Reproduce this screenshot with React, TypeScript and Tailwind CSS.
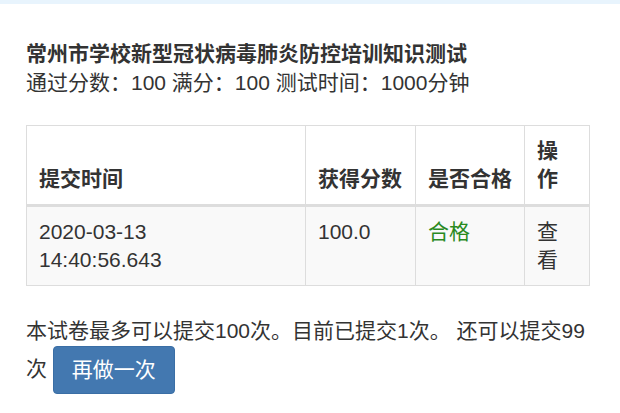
import React from 'react';

type Attempt = {
  time: string[];
  score: string;
  passed: boolean;
};

const attempts: Attempt[] = [
  { time: ['2020-03-13', '14:40:56.643'], score: '100.0', passed: true },
];

export default function App() {
  return (
    <div className="min-h-[413px] w-[620px] bg-white text-[#333] text-[21px] leading-[28px] [font-family:'Liberation_Sans','Noto_Sans_CJK_SC',sans-serif]">
      <div className="h-[4px] bg-[#e8f4fd]" />
      <div className="pl-[26px] pr-[30px] pt-[35px]">
        <div className="leading-[29px]">
          <div className="font-bold">常州市学校新型冠状病毒肺炎防控培训知识测试</div>
          <div>通过分数：100 满分：100 测试时间：1000分钟</div>
        </div>

        <table className="mt-[28px] w-[563px] table-fixed border-collapse border border-[#ddd]">
          <colgroup>
            <col className="w-[279px]" />
            <col className="w-[110px]" />
            <col className="w-[109px]" />
            <col className="w-[65px]" />
          </colgroup>
          <thead>
            <tr>
              <th className="border border-b-[3px] border-[#ddd] px-[12px] py-[11px] text-left align-bottom font-bold">提交时间</th>
              <th className="border border-b-[3px] border-[#ddd] px-[12px] py-[11px] text-left align-bottom font-bold">获得分数</th>
              <th className="border border-b-[3px] border-[#ddd] px-[12px] py-[11px] text-left align-bottom font-bold">是否合格</th>
              <th className="border border-b-[3px] border-[#ddd] px-[12px] py-[11px] text-left align-bottom font-bold">操作</th>
            </tr>
          </thead>
          <tbody>
            {attempts.map((a, i) => (
              <tr key={i} className="bg-[#f9f9f9]">
                <td className="border border-[#ddd] px-[12px] py-[11px] align-top">
                  {a.time[0]}
                  <br />
                  {a.time[1]}
                </td>
                <td className="border border-[#ddd] px-[12px] py-[11px] align-top">{a.score}</td>
                <td className="border border-[#ddd] px-[12px] py-[11px] align-top text-[#2a8a1f]">
                  {a.passed ? '合格' : '不合格'}
                </td>
                <td className="border border-[#ddd] px-[12px] py-[11px] align-top">查看</td>
              </tr>
            ))}
          </tbody>
        </table>

        <p className="mt-[30px] w-[564px] leading-[30px]">
          本试卷最多可以提交100次。目前已提交1次。 还可以提交99次{' '}
          <button className="inline-block h-[48px] rounded-[4px] border border-[#3a6ea5] bg-[#4378b0] px-[18px] align-middle leading-[46px] text-white">
            再做一次
          </button>
        </p>
      </div>
    </div>
  );
}
